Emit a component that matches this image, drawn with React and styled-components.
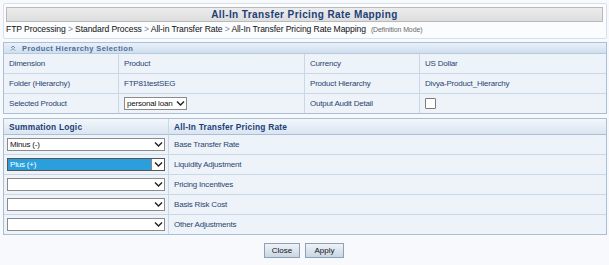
import styled, { createGlobalStyle } from 'styled-components';

const GlobalStyle = createGlobalStyle`
  html, body {
    margin: 0;
    padding: 0;
    background: #f7f9fc;
    font-family: "Liberation Sans", Arial, sans-serif;
  }
`;

const Page = styled.div`
  width: 609px;
  height: 265px;
  padding: 3px 2px 0 3px;
  box-sizing: border-box;
  display: flex;
  flex-direction: column;
`;

const HeaderBox = styled.div`
  border: 1px solid #d6e0ea;
  background: #fbfcfe;
  padding: 3px 3px 3px 2px;
  border-radius: 2px;
`;

const TitleBar = styled.div`
  height: 13px;
  border: 1px solid #b9b9b9;
  background: linear-gradient(#ececec, #dedede);
  color: #1d3f78;
  font-weight: bold;
  font-size: 10px;
  letter-spacing: 0.4px;
  line-height: 13px;
  text-align: center;
`;

const Crumbs = styled.div`
  margin-top: 2px;
  font-size: 8.6px;
  letter-spacing: -0.1px;
  color: #111;
  line-height: 11px;
  white-space: nowrap;
`;

const Sep = styled.span`
  color: #7a8aa0;
`;

const Mode = styled.span`
  margin-left: 5px;
  font-size: 7px;
  color: #6a6a6a;
`;

const Panel = styled.div`
  margin-top: ${(p) => p.$gap}px;
  border: 1px solid #a9bfd6;
  background: #edf3f9;
`;

const PanelHead = styled.div`
  height: 10px;
  background: linear-gradient(#e9f1f9, #cfdeee);
  border-bottom: 1px solid #b7cadd;
  display: flex;
  align-items: center;
  gap: 6px;
  padding-left: 6px;
  font-size: 7.5px;
  font-weight: bold;
  color: #4e6d98;
  letter-spacing: 0.4px;
`;

const Grid = styled.div`
  display: grid;
  grid-template-columns: ${(p) => p.$cols};
`;

const Cell = styled.div`
  height: ${(p) => p.$h || 19}px;
  border-bottom: ${(p) => (p.$last ? 'none' : '1px solid #c9d8e6')};
  border-left: ${(p) => (p.$first ? 'none' : '1px solid #c9d8e6')};
  display: flex;
  align-items: center;
  padding-left: ${(p) => p.$pad ?? 5}px;
  font-size: 8px;
  letter-spacing: -0.2px;
  color: ${(p) => (p.$label ? '#2b4570' : '#1a1a1a')};
  white-space: nowrap;
`;

const HeadCell = styled(Cell)`
  height: 15px;
  background: linear-gradient(#f3f7fb, #d9e5f1);
  border-bottom: 1px solid #a9bfd6;
  font-weight: bold;
  font-size: 8.4px;
  letter-spacing: 0.2px;
  color: #1d3f78;
`;

const SelectBox = styled.div`
  width: ${(p) => p.$w}px;
  height: 13px;
  box-sizing: border-box;
  border: 1px solid ${(p) => (p.$active ? '#555' : '#8a8a8a')};
  background: ${(p) => (p.$active ? '#2b9fdc' : '#fff')};
  color: ${(p) => (p.$active ? '#fff' : '#111')};
  font-size: 8px;
  letter-spacing: -0.2px;
  display: flex;
  align-items: center;
  padding-left: 2px;
  justify-content: space-between;
`;

const Arrow = styled.span`
  width: 12px;
  height: 11px;
  flex-shrink: 0;
  display: flex;
  align-items: center;
  justify-content: center;
  background: #fff;
  border-left: ${(p) => (p.$active ? '1px solid #888' : 'none')};
`;

const Check = styled.span`
  width: 9px;
  height: 9px;
  border: 1px solid #7a7a7a;
  background: #fff;
  border-radius: 1px;
`;

const Buttons = styled.div`
  display: flex;
  justify-content: center;
  gap: 5px;
  margin-top: 8px;
  padding-right: 2px;
`;

const Button = styled.button`
  width: ${(p) => p.$w}px;
  height: 15px;
  padding: 0;
  border: 1px solid #8ea0b4;
  background: linear-gradient(#eef3f8, #c9d6e3);
  font-family: inherit;
  font-size: 8px;
  color: #111;
`;

const Chevron = () => (
  <svg width="9" height="7" viewBox="0 0 9 7">
    <path d="M1 1.5 L4.5 5 L8 1.5" fill="none" stroke="#222" strokeWidth="1.4" />
  </svg>
);

const UpIcon = () => (
  <svg width="6" height="6" viewBox="0 0 6 6">
    <path d="M1 3 L3 1 L5 3 M1 5.5 L3 3.5 L5 5.5" fill="none" stroke="#6f88a8" strokeWidth="1" />
  </svg>
);

const Select = ({ value, w, active }) => (
  <SelectBox $w={w} $active={active}>
    <span>{value}</span>
    <Arrow $active={active}><Chevron /></Arrow>
  </SelectBox>
);

const rates = [
  { logic: 'Minus (-)', name: 'Base Transfer Rate' },
  { logic: 'Plus (+)', name: 'Liquidity Adjustment', active: true },
  { logic: '', name: 'Pricing Incentives' },
  { logic: '', name: 'Basis Risk Cost' },
  { logic: '', name: 'Other Adjustments' },
];

export default function App() {
  return (
    <Page>
      <GlobalStyle />
      <HeaderBox>
        <TitleBar>All-In Transfer Pricing Rate Mapping</TitleBar>
        <Crumbs>
          FTP Processing <Sep>&gt;</Sep> Standard Process <Sep>&gt;</Sep> All-in Transfer Rate{' '}
          <Sep>&gt;</Sep> All-In Transfer Pricing Rate Mapping
          <Mode>(Definition Mode)</Mode>
        </Crumbs>
      </HeaderBox>

      <Panel $gap={3}>
        <PanelHead>
          <UpIcon />
          Product Hierarchy Selection
        </PanelHead>
        <Grid $cols="114px 186px 115px 1fr">
          <Cell $first $label>Dimension</Cell>
          <Cell $label>Product</Cell>
          <Cell $label>Currency</Cell>
          <Cell $label>US Dollar</Cell>
          <Cell $first $label>Folder (Hierarchy)</Cell>
          <Cell $label>FTP81testSEG</Cell>
          <Cell $label>Product Hierarchy</Cell>
          <Cell $label>Divya-Product_Hierarchy</Cell>
          <Cell $first $last $label>Selected Product</Cell>
          <Cell $last>
            <Select value="personal loan" w={63} />
          </Cell>
          <Cell $last $label>Output Audit Detail</Cell>
          <Cell $last><Check /></Cell>
        </Grid>
      </Panel>

      <Panel $gap={4}>
        <Grid $cols="164px 1fr">
          <HeadCell $first>Summation Logic</HeadCell>
          <HeadCell>All-In Transfer Pricing Rate</HeadCell>
          {rates.map((r, i) => {
            const last = i === rates.length - 1;
            return [
              <Cell key={r.name + 'l'} $first $last={last} $pad={3}>
                <Select value={r.logic} w={158} active={r.active} />
              </Cell>,
              <Cell key={r.name} $last={last} $label>{r.name}</Cell>,
            ];
          })}
        </Grid>
      </Panel>

      <Buttons>
        <Button $w={36}>Close</Button>
        <Button $w={39}>Apply</Button>
      </Buttons>
    </Page>
  );
}
